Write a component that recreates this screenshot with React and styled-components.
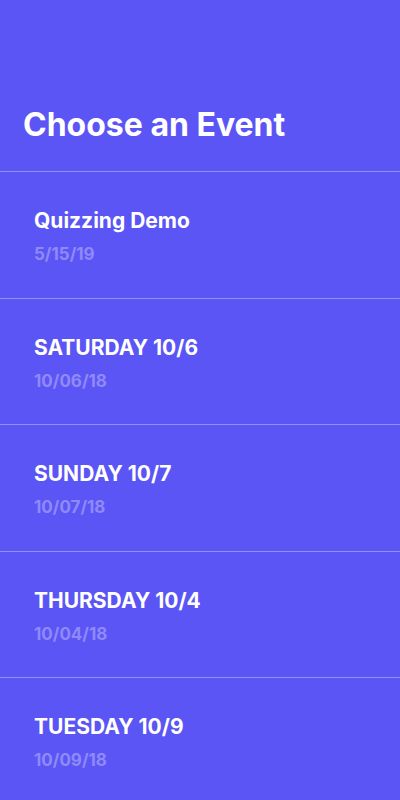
import React from "react";
import styled, { createGlobalStyle } from "styled-components";

const events = [
  { name: "Quizzing Demo", date: "5/15/19" },
  { name: "SATURDAY 10/6", date: "10/06/18" },
  { name: "SUNDAY 10/7", date: "10/07/18" },
  { name: "THURSDAY 10/4", date: "10/04/18" },
  { name: "TUESDAY 10/9", date: "10/09/18" },
];

const GlobalStyle = createGlobalStyle`
  html, body {
    margin: 0;
    padding: 0;
    background: #5b55f5;
  }
  * {
    box-sizing: border-box;
  }
`;

const Screen = styled.div`
  width: 400px;
  height: 800px;
  overflow: hidden;
  background: #5b55f5;
  font-family: Inter, "Liberation Sans", sans-serif;
  color: #ffffff;
`;

const Header = styled.header`
  padding: 105px 23px 0;
  height: 171px;

  h1 {
    margin: 0;
    font-size: 32px;
    font-weight: 700;
    line-height: 40px;
  }
`;

const List = styled.ul`
  list-style: none;
  margin: 0;
  padding: 0;
`;

const Row = styled.li`
  height: 126.5px;
  border-top: 1px solid rgba(255, 255, 255, 0.35);
  padding: 36px 34px 0;
`;

const Name = styled.div`
  font-size: 21px;
  font-weight: 700;
  line-height: 26px;
`;

const Date = styled.div`
  margin-top: 9px;
  font-size: 17px;
  font-weight: 700;
  line-height: 22px;
  color: #8f8af8;
`;

const App = () => {
  return (
    <>
      <GlobalStyle />
      <Screen>
        <Header>
          <h1>Choose an Event</h1>
        </Header>
        <List>
          {events.map((e) => (
            <Row key={e.name}>
              <Name>{e.name}</Name>
              <Date>{e.date}</Date>
            </Row>
          ))}
        </List>
      </Screen>
    </>
  );
};

export default App;
